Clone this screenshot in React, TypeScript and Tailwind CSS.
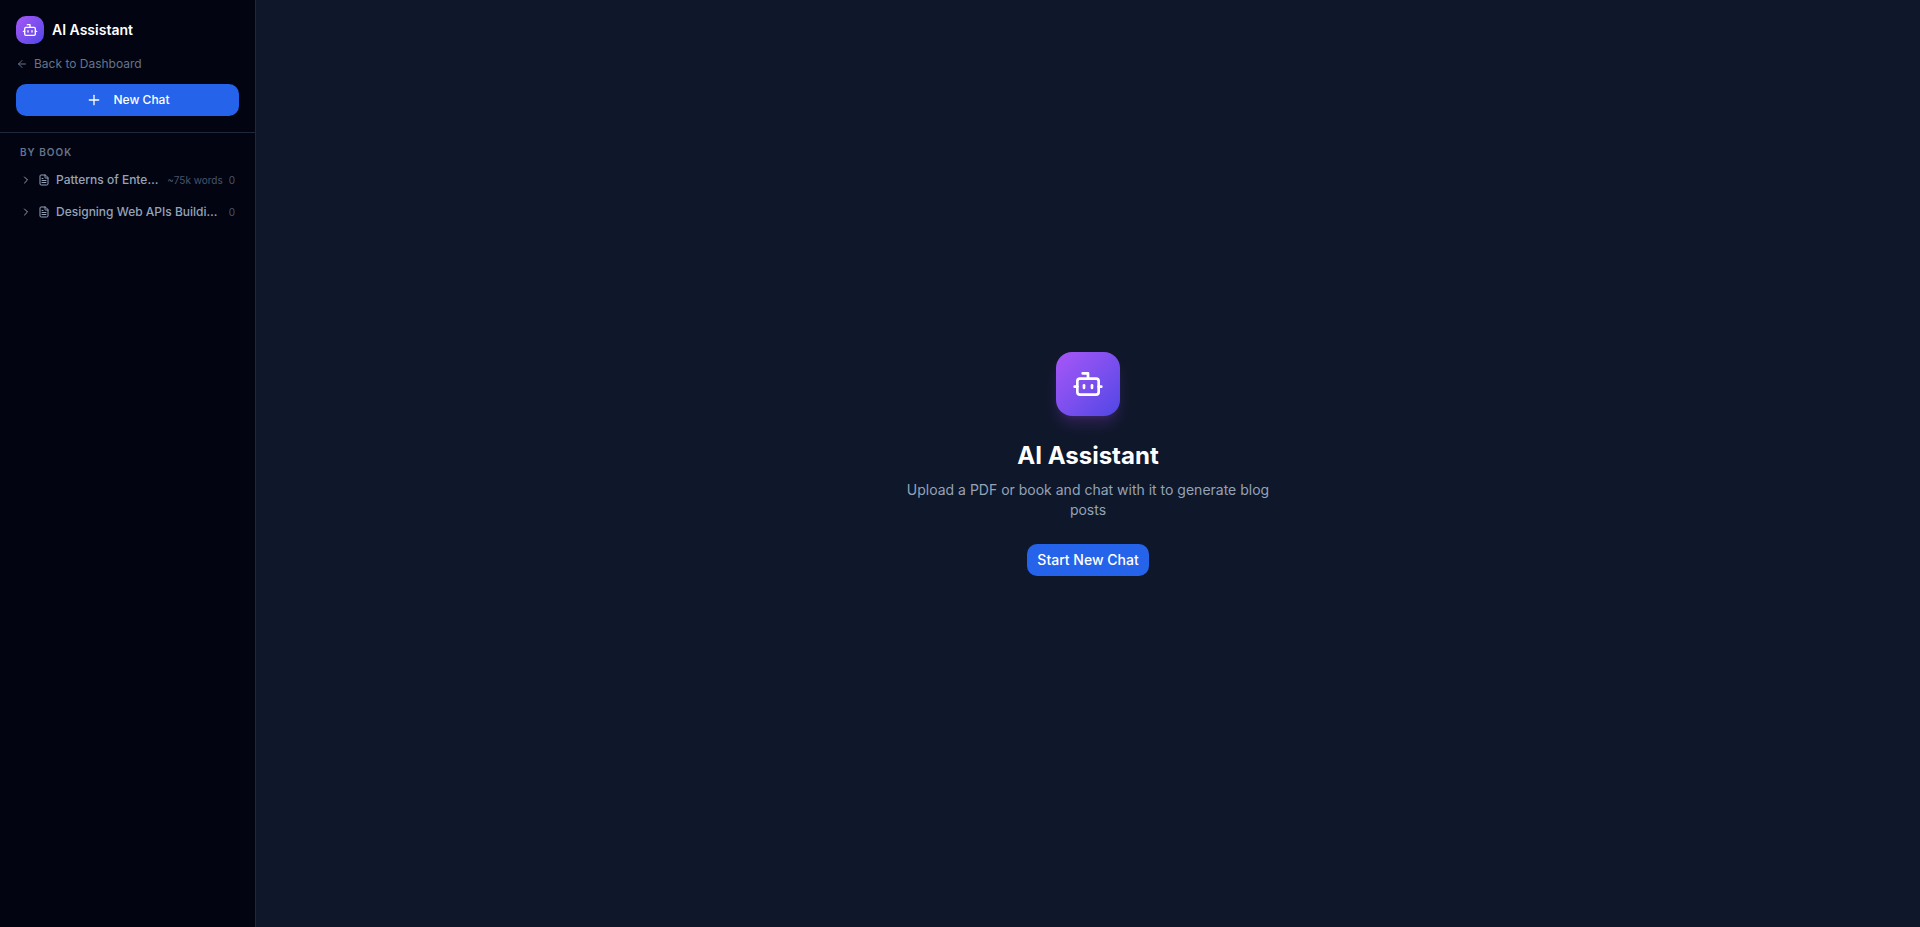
import { ArrowLeft, Bot, ChevronRight, FileText, Plus } from "lucide-react";

const books = [
  { title: "Patterns of Enterprise Application Architecture", words: "~75k words", count: 0 },
  { title: "Designing Web APIs Building APIs That Developers Love", words: "", count: 0 },
];

export default function App() {
  return (
    <div className="flex h-screen bg-[#0f172a] font-['Inter',sans-serif] overflow-hidden">
      <aside className="flex w-64 shrink-0 flex-col border-r border-[#1e293b] bg-[#020412]">
        <div className="border-b border-[#1e293b] p-4">
          <div className="flex items-center gap-2">
            <div className="flex h-7 w-7 items-center justify-center rounded-[10px] bg-gradient-to-br from-[#a855f7] to-[#4f46e5]">
              <Bot className="h-4 w-4 text-white" strokeWidth={2} />
            </div>
            <span className="text-sm font-semibold text-white">AI Assistant</span>
          </div>
          <a className="mt-2 flex h-6 items-center gap-1.5 text-xs text-[#64748b]">
            <ArrowLeft className="h-3 w-3" />
            Back to Dashboard
          </a>
          <button className="mt-2 flex h-8 w-full items-center justify-center gap-2 rounded-[10px] bg-[#2563eb] text-xs font-medium text-white">
            <Plus className="h-4 w-4" />
            <span className="ml-1">New Chat</span>
          </button>
        </div>
        <div className="px-3 pt-[11px]">
          <div className="mb-1 px-2 text-[10px] leading-4 font-semibold tracking-widest text-[#64748b] uppercase">By Book</div>
          <div className="flex flex-col">
            {books.map((b) => (
              <div key={b.title} className="flex h-8 items-center gap-1.5 rounded-lg pr-2 pl-2">
                <ChevronRight className="h-3 w-3 shrink-0 text-[#94a3b8]" />
                <FileText className="h-3 w-3 shrink-0 text-[#94a3b8]" />
                <span className="min-w-0 flex-1 truncate text-xs font-medium text-[#94a3b8]">{b.title}</span>
                {b.words && <span className="ml-0.5 shrink-0 text-[10px] text-[#475569]">{b.words}</span>}
                <span className="shrink-0 text-[10px] text-[#475569]">{b.count}</span>
              </div>
            ))}
          </div>
        </div>
      </aside>
      <main className="flex flex-1 items-center justify-center">
        <div className="flex max-w-sm flex-col items-center text-center">
          <div className="mb-6 flex h-16 w-16 items-center justify-center rounded-2xl bg-gradient-to-br from-[#a855f7] to-[#4f46e5] shadow-lg shadow-purple-500/20">
            <Bot className="h-8 w-8 text-white" strokeWidth={2} />
          </div>
          <h1 className="mb-2 text-2xl font-bold text-white">AI Assistant</h1>
          <p className="mb-6 text-sm text-[#94a3b8]">Upload a PDF or book and chat with it to generate blog posts</p>
          <button className="h-8 rounded-[10px] bg-[#2563eb] px-2.5 text-sm font-medium text-white">Start New Chat</button>
        </div>
      </main>
    </div>
  );
}
